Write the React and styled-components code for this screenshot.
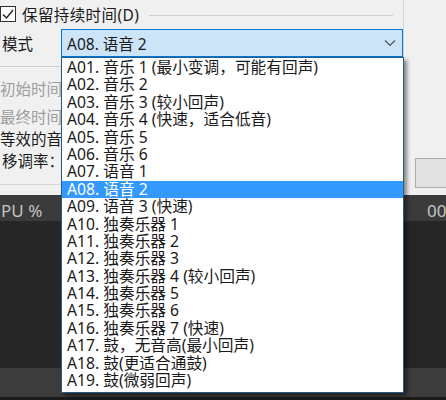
import React from 'react';
import styled, { createGlobalStyle } from 'styled-components';

const FONT = `"Noto Sans", "Noto Sans CJK SC", sans-serif`;

const GlobalStyle = createGlobalStyle`
  html, body {
    margin: 0;
    padding: 0;
    overflow: hidden;
    background: #f0f0f0;
  }
  * { box-sizing: border-box; }
`;

const Screen = styled.div`
  position: relative;
  width: 446px;
  height: 400px;
  overflow: hidden;
  font-family: ${FONT};
  font-size: 15.5px;
  color: #1a1a1a;
`;

const Dialog = styled.div`
  height: 195px;
  background: #f0f0f0;
  display: flex;
`;

const Group = styled.div`
  width: 414px;
  height: 185px;
  border-right: 1px solid #d6d6d6;
  border-bottom: 1px solid #d6d6d6;
  display: flex;
  flex-direction: column;
`;

const Side = styled.div`
  flex: 1;
  display: flex;
  align-items: flex-start;
  padding: 158px 0 0 11px;
`;

const SideButton = styled.div`
  width: 40px;
  height: 30px;
  background: #e1e1e1;
  border: 1px solid #adadad;
`;

const CheckRow = styled.div`
  height: 28px;
  display: flex;
  align-items: center;
  padding-right: 10px;
`;

const CheckBox = styled.span`
  width: 16px;
  height: 16px;
  border: 1px solid #333;
  background: #fff;
  display: flex;
  align-items: center;
  justify-content: center;
  margin-right: 6px;
`;

const CheckLabel = styled.span`
  white-space: nowrap;
  letter-spacing: 0.4px;
`;

const GroupLine = styled.span`
  flex: 1;
  height: 1px;
  background: #cfcfcf;
  margin: 3px 0 0 10px;
`;

const ModeRow = styled.div`
  height: 28px;
  margin-top: 1px;
  display: flex;
  align-items: center;
`;

const ModeLabel = styled.span`
  width: 61px;
  padding-left: 2px;
`;

const Combo = styled.div`
  width: 342px;
  height: 28px;
  background: #cce4f7;
  border: 1px solid #0078d7;
  display: flex;
  align-items: center;
  justify-content: space-between;
  padding: 0 6px 0 5px;
`;

const Separator = styled.div`
  height: 1px;
  width: 403px;
  margin-top: 9px;
  background: #cfcfcf;
`;

const FieldLabel = styled.div`
  height: 22px;
  line-height: 22px;
  margin-top: ${({ $mt }) => $mt}px;
  padding-left: ${({ $pl }) => $pl || 0}px;
  color: ${({ $disabled }) => ($disabled ? '#9d9d9d' : '#1a1a1a')};
  white-space: nowrap;
`;

const Dark = styled.div`
  height: 205px;
  display: flex;
  flex-direction: column;
`;

const Header = styled.div`
  height: 26px;
  background: #3b3b3b;
  color: #c4c4c4;
  font-size: 17px;
  display: flex;
  align-items: flex-end;
  padding-left: 1px;
  line-height: 20px;
`;

const HeaderCell = styled.span`
  width: ${({ $w }) => $w}px;
  flex-shrink: 0;
  white-space: nowrap;
`;

const Body = styled.div`
  flex: 1;
  background: #262626;
`;

const Band = styled.div`
  height: 32px;
  background: #3c3c3c;
  border-bottom: 3px solid #1b1b1b;
`;

const List = styled.div`
  position: absolute;
  left: 61px;
  top: 57px;
  width: 343px;
  height: 336px;
  background: #fff;
  border: 1px solid #2a5b86;
  box-shadow: 3px 3px 4px rgba(0, 0, 0, 0.45);
  padding-top: 1px;
  font-size: 15.7px;
`;

const Item = styled.div`
  height: 17.4px;
  line-height: 17.4px;
  padding-left: 5px;
  white-space: nowrap;
  background: ${({ $active }) => ($active ? '#3399ff' : 'transparent')};
  color: ${({ $active }) => ($active ? '#fff' : '#1a1a1a')};
`;

const items = [
  'A01. 音乐 1 (最小变调，可能有回声)',
  'A02. 音乐 2',
  'A03. 音乐 3 (较小回声)',
  'A04. 音乐 4 (快速，适合低音)',
  'A05. 音乐 5',
  'A06. 音乐 6',
  'A07. 语音 1',
  'A08. 语音 2',
  'A09. 语音 3 (快速)',
  'A10. 独奏乐器 1',
  'A11. 独奏乐器 2',
  'A12. 独奏乐器 3',
  'A13. 独奏乐器 4 (较小回声)',
  'A14. 独奏乐器 5',
  'A15. 独奏乐器 6',
  'A16. 独奏乐器 7 (快速)',
  'A17. 鼓，无音高(最小回声)',
  'A18. 鼓(更适合通鼓)',
  'A19. 鼓(微弱回声)',
];

const Check = () => (
  <svg width="14" height="14" viewBox="0 0 14 14">
    <path d="M2 7.5 L5.5 11 L12 3" fill="none" stroke="#222" strokeWidth="1.4" />
  </svg>
);

const Chevron = () => (
  <svg width="12" height="8" viewBox="0 0 12 8">
    <path d="M1 1.5 L6 6.5 L11 1.5" fill="none" stroke="#555" strokeWidth="1.2" />
  </svg>
);

export default function App() {
  return (
    <Screen>
      <GlobalStyle />
      <Dialog>
        <Group>
          <CheckRow>
            <CheckBox><Check /></CheckBox>
            <CheckLabel>保留持续时间(D)</CheckLabel>
            <GroupLine />
          </CheckRow>
          <ModeRow>
            <ModeLabel>模式</ModeLabel>
            <Combo>
              <span>A08. 语音 2</span>
              <Chevron />
            </Combo>
          </ModeRow>
          <Separator />
          <FieldLabel $mt={11} $disabled>初始时间</FieldLabel>
          <FieldLabel $mt={6} $disabled>最终时间</FieldLabel>
          <FieldLabel $mt={0}>等效的音高</FieldLabel>
          <FieldLabel $mt={0} $pl={2}>移调率：</FieldLabel>
        </Group>
        <Side>
          <SideButton />
        </Side>
      </Dialog>
      <Dark>
        <Header>
          <HeaderCell $w={394}>PU %</HeaderCell>
          <HeaderCell $w={32}>0</HeaderCell>
          <HeaderCell $w={20}>00</HeaderCell>
        </Header>
        <Body />
        <Band />
      </Dark>
      <List>
        {items.map((t) => (
          <Item key={t} $active={t.startsWith('A08')}>{t}</Item>
        ))}
      </List>
    </Screen>
  );
}
